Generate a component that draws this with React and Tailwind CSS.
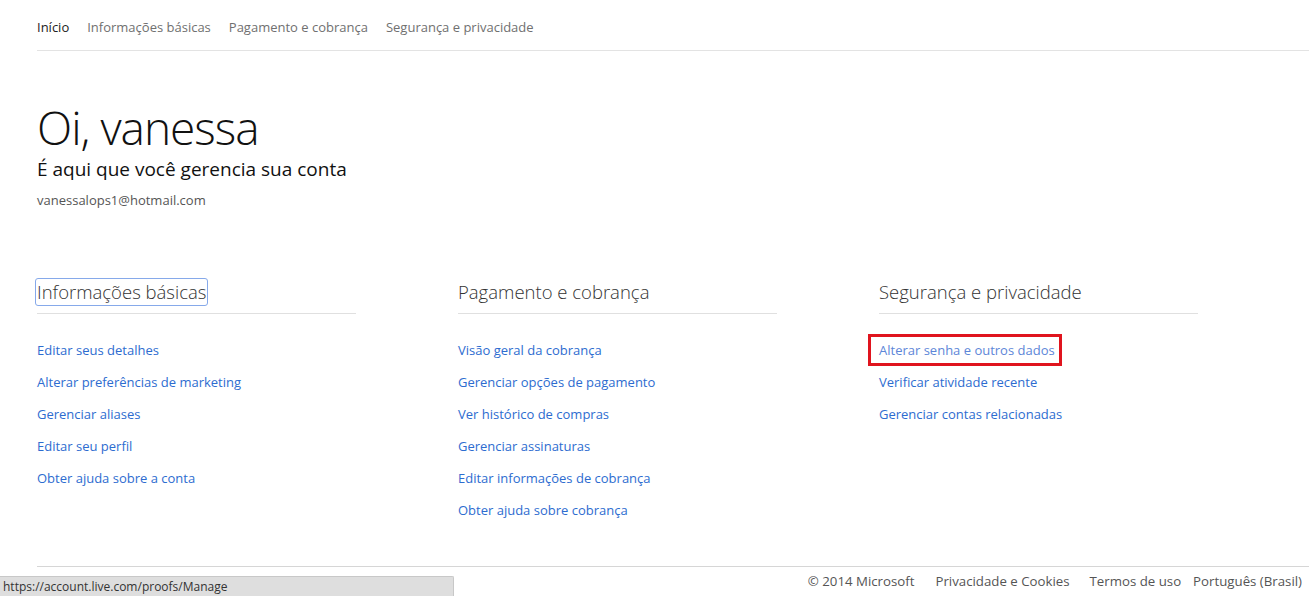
const font = { fontFamily: '"Segoe UI", "Open Sans", "Noto Sans", sans-serif' };

const columns = [
  {
    title: 'Informações básicas',
    focused: true,
    links: [
      'Editar seus detalhes',
      'Alterar preferências de marketing',
      'Gerenciar aliases',
      'Editar seu perfil',
      'Obter ajuda sobre a conta',
    ],
  },
  {
    title: 'Pagamento e cobrança',
    links: [
      'Visão geral da cobrança',
      'Gerenciar opções de pagamento',
      'Ver histórico de compras',
      'Gerenciar assinaturas',
      'Editar informações de cobrança',
      'Obter ajuda sobre cobrança',
    ],
  },
  {
    title: 'Segurança e privacidade',
    links: [
      'Alterar senha e outros dados',
      'Verificar atividade recente',
      'Gerenciar contas relacionadas',
    ],
    hovered: 0,
  },
];

export default function App() {
  return (
    <div className="relative w-[1309px] h-[596px] bg-white overflow-hidden text-[#222]" style={font}>
      <div className="pl-[37px]">
        <nav className="flex items-center gap-[18px] h-[51px] pt-[5px] border-b border-[#e3e3e3] text-[13px] text-[#707070]">
          <span className="text-[#222]">Início</span>
          <span>Informações básicas</span>
          <span>Pagamento e cobrança</span>
          <span>Segurança e privacidade</span>
        </nav>

        <div className="pt-[50px]">
          <h1 className="text-[46px] font-light leading-[52px] text-[#111] tracking-[-1px]">Oi, vanessa</h1>
          <p className="text-[19px] leading-[26px] text-[#111] mt-[3px]">É aqui que você gerencia sua conta</p>
          <p className="text-[13px] text-[#555] mt-[9px]">vanessalops1@hotmail.com</p>
        </div>

        <div className="flex mt-[68px]">
          {columns.map((col) => (
            <div key={col.title} className="w-[421px]">
              <div className="w-[319px] border-b border-[#e0e0e0] pb-[8px]">
                <h2
                  className={
                    'inline-block text-[18.5px] font-light leading-[26px] text-[#333] ' +
                    (col.focused ? 'outline outline-1 outline-[#86a9ea] rounded-[2px] -ml-[1px] px-[1px]' : '')
                  }
                >
                  {col.title}
                </h2>
              </div>
              <ul className="mt-[26px] flex flex-col gap-[13px]">
                {col.links.map((l, i) => (
                  <li key={l} className="h-[19px] leading-[19px]">
                    {col.hovered === i ? (
                      <span className="relative text-[13px] text-[#5d86d8]">
                        {l}
                        <span className="absolute -left-[11px] -right-[7px] -top-[7px] -bottom-[7px] border-[3px] border-[#e0141e]" />
                      </span>
                    ) : (
                      <span className="text-[13px] text-[#2d6cd0]">{l}</span>
                    )}
                  </li>
                ))}
              </ul>
            </div>
          ))}
        </div>
      </div>

      <div className="absolute left-[37px] right-0 top-[566px] border-t border-[#d6d6d6]" />
      <div className="absolute right-[7px] top-[572px] flex text-[13.25px] text-[#555]">
        <span>© 2014 Microsoft</span>
        <span className="ml-[21px]">Privacidade e Cookies</span>
        <span className="ml-[20px]">Termos de uso</span>
        <span className="ml-[12px]">Português (Brasil)</span>
      </div>

      <div className="absolute left-0 bottom-0 w-[454px] h-[20px] bg-[#dedede] border-t border-r border-[#c8c8c8] rounded-tr-[2px] pl-[3px] text-[12px] leading-[20px] text-[#333]">
        https://account.live.com/proofs/Manage
      </div>
    </div>
  );
}
